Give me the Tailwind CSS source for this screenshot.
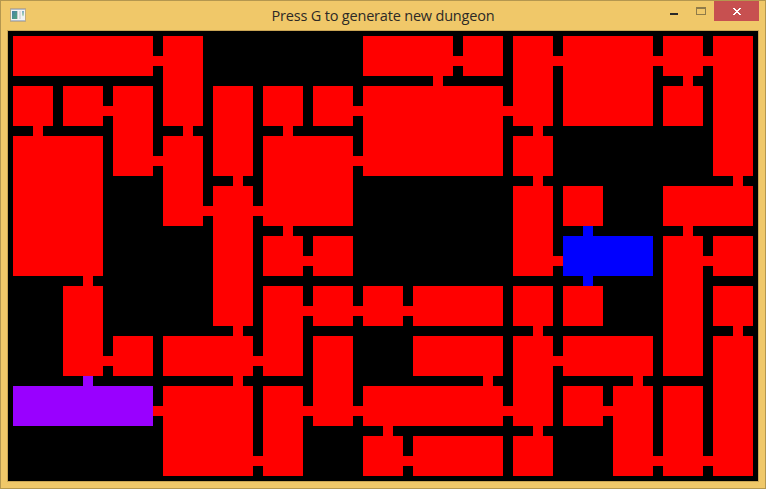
<!DOCTYPE html>
<html lang="en">
<head>
<meta charset="utf-8">
<title>Press G to generate new dungeon</title>
<script src="https://cdn.jsdelivr.net/npm/@tailwindcss/browser@4"></script>
</head>
<body class="w-[766px] h-[489px] overflow-hidden">
<div class="flex flex-col w-[766px] h-[489px] bg-[#f0c869] border border-[#b4974f] px-[6px] pb-[6px]">
  <header class="flex justify-between h-[29px] shrink-0">
    <div class="w-[92px] pt-[7px] pl-[3px]">
      <svg class="block" width="16" height="14" viewBox="0 0 16 14" shape-rendering="crispEdges">
        <defs>
          <linearGradient id="pane" x1="0" y1="0" x2="1" y2="1"><stop offset="0" stop-color="#4a7fa8"/><stop offset="1" stop-color="#4fa67c"/></linearGradient>
          <linearGradient id="side" x1="0" y1="0" x2="0" y2="1"><stop offset="0" stop-color="#7aa8c8"/><stop offset=".5" stop-color="#a9d3b4"/><stop offset=".7" stop-color="#f0f2f2"/></linearGradient>
        </defs>
        <rect width="16" height="14" rx="1" fill="#c0ab80"/>
        <rect x="1" y="1" width="14" height="12" fill="#b2bccb"/>
        <rect x="1" y="2" width="14" height="10" fill="#f3f3f4"/>
        <rect x="2" y="3" width="5" height="8" fill="url(#pane)"/>
        <rect x="7" y="3" width="1" height="8" fill="#c4cacc"/>
        <rect x="9" y="3" width="2" height="8" fill="#dcdddf"/>
        <rect x="12" y="3" width="2" height="8" fill="url(#side)"/>
      </svg>
    </div>
    <h1 class="w-[240px] pt-[5px] text-center whitespace-nowrap text-[14.5px] leading-[20px] tracking-[-0.19px] text-[#2c2a26] font-['Open_Sans','Noto_Sans',sans-serif]">Press G to generate new dungeon</h1>
    <div class="flex w-[92px]">
      <button class="w-[21px] h-5" aria-label="Minimize">
        <svg class="block" width="21" height="20" shape-rendering="crispEdges"><rect x="3" y="12" width="8" height="2" fill="#292929"/></svg>
      </button>
      <button class="w-[26px] h-5" aria-label="Maximize">
        <svg class="block" width="26" height="20" shape-rendering="crispEdges"><path d="M8 6h10v8H8zM9 8v5h8V8z" fill-rule="evenodd" fill="#8f7b49"/></svg>
      </button>
      <button class="w-[45px] h-5 bg-[#c75050]" aria-label="Close">
        <svg class="block" width="45" height="20" shape-rendering="crispEdges"><path d="M19 7h2v1h1v1h2v-1h1v-1h2v1h-1v1h-1v1h-1v1h1v1h1v1h1v1h-2v-1h-1v-1h-2v1h-1v1h-2v-1h1v-1h1v-1h1v-1h-1v-1h-1v-1h-1z" fill="#fff"/></svg>
      </button>
    </div>
  </header>
  <main class="w-[752px] h-[452px] shrink-0 border border-[#c9a554] bg-black">
    <svg id="map" class="block" width="750" height="450" viewBox="0 0 750 450" fill="#ff0000" shape-rendering="crispEdges"></svg>
  </main>
</div>
<script>
const BLUE = '#0000ff', PURPLE = '#9900ff';
// Rooms: column, row, columns spanned, rows spanned, colour
const rooms = [
  [0,0,3,1],[3,0,1,2],[7,0,2,1],[9,0,1,1],[10,0,1,2],[11,0,2,2],[13,0,1,1],[14,0,1,3],
  [0,1,1,1],[1,1,1,1],[2,1,1,2],[4,1,1,2],[5,1,1,1],[6,1,1,1],[7,1,3,2],[13,1,1,1],
  [0,2,2,3],[3,2,1,2],[5,2,2,2],[10,2,1,1],
  [4,3,1,3],[10,3,1,2],[11,3,1,1],[13,3,2,1],
  [5,4,1,1],[6,4,1,1],[11,4,2,1,BLUE],[13,4,1,3],[14,4,1,1],
  [1,5,1,2],[5,5,1,2],[6,5,1,1],[7,5,1,1],[8,5,2,1],[10,5,1,1],[11,5,1,1],[14,5,1,1],
  [2,6,1,1],[3,6,2,1],[6,6,1,2],[8,6,2,1],[10,6,1,2],[11,6,2,1],[14,6,1,3],
  [0,7,3,1,PURPLE],[3,7,2,2],[5,7,1,2],[7,7,3,1],[11,7,1,1],[12,7,1,2],[13,7,1,2],
  [7,8,1,1],[8,8,2,1],[10,8,1,1]
];
// Doors on the left edge of a cell: column, row
const sideDoors = [
  [3,0],[9,0],[11,0],[13,0],[14,0],[2,1],[7,1],[10,1],[3,2],[7,2],[4,3],[5,3],
  [6,4],[11,4],[14,4],[6,5],[7,5],[8,5],[2,6],[5,6],[11,6],
  [3,7],[6,7],[7,7],[10,7],[12,7],[5,8],[8,8],[13,8],[14,8]
];
// Doors on the top edge of a cell: column, row, colour
const topDoors = [
  [8,1],[13,1],[0,2],[3,2],[5,2],[10,2],[4,3],[10,3],[14,3],
  [5,4],[11,4,BLUE],[13,4],[1,5],[11,5,BLUE],[4,6],[10,6],[14,6],
  [1,7,PURPLE],[4,7],[9,7],[12,7],[7,8],[10,8]
];
const map = document.getElementById('map');
function rect(x, y, width, height, fill) {
  const el = document.createElementNS('http://www.w3.org/2000/svg', 'rect');
  const attrs = { x, y, width, height };
  if (fill) attrs.fill = fill;
  for (const k in attrs) el.setAttribute(k, attrs[k]);
  map.appendChild(el);
}
for (const [c, r, w, h, f] of rooms) rect(50*c + 5, 50*r + 5, 50*w - 10, 50*h - 10, f);
for (const [c, r] of sideDoors) rect(50*c - 5, 50*r + 25, 10, 10);
for (const [c, r, f] of topDoors) rect(50*c + 25, 50*r - 5, 10, 10, f);
</script>
</body>
</html>
